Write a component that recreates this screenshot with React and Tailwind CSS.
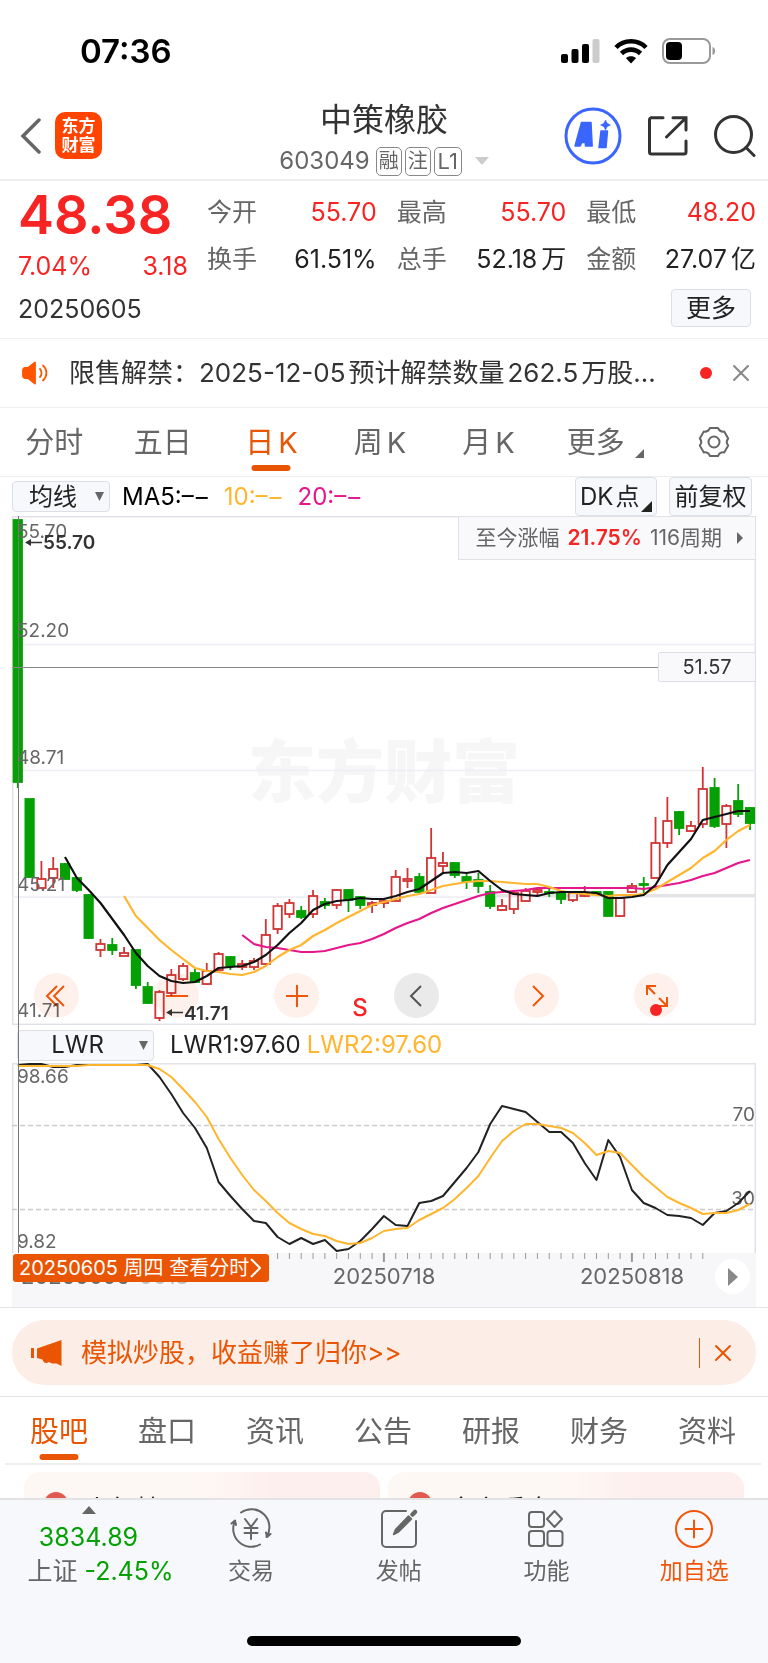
import { X } from 'lucide-react';

const quotes = [
  { label: '今开', value: '55.70', up: true },
  { label: '最高', value: '55.70', up: true },
  { label: '最低', value: '48.20', up: true },
  { label: '换手', value: '61.51%' },
  { label: '总手', value: '52.18', unit: '万' },
  { label: '金额', value: '27.07', unit: '亿' },
];

const periods = [
  { name: '分时' },
  { name: '五日' },
  { name: '日', suffix: 'K', active: true },
  { name: '周', suffix: 'K' },
  { name: '月', suffix: 'K' },
];
const sections = ['股吧', '盘口', '资讯', '公告', '研报', '财务', '资料'];

// [direction, high, body top, body bottom, low] in chart units
const candles = [
  ['g', 520, 520, 782, 788], ['g', 799, 799, 877, 878], ['r', 861, 879, 888, 888], ['r', 857, 869, 878, 888],
  ['g', 863, 864, 879, 879], ['g', 878, 878, 890, 892], ['g', 894, 895, 938, 939], ['r', 939, 944, 950, 957],
  ['g', 938, 945, 950, 955], ['r', 947, 953, 956, 956], ['g', 950, 950, 985, 989], ['g', 982, 987, 1003, 1004],
  ['r', 990, 992, 1018, 1021], ['r', 969, 975, 993, 996], ['r', 963, 966, 979, 981], ['g', 969, 973, 982, 983],
  ['r', 963, 971, 984, 985], ['r', 952, 954, 970, 971], ['g', 956, 957, 966, 970], ['r', 960, 964, 967, 970],
  ['r', 958, 961, 967, 970], ['r', 919, 935, 964, 964], ['r', 903, 906, 929, 934], ['r', 899, 903, 914, 918],
  ['g', 906, 911, 917, 919], ['r', 890, 896, 914, 918], ['g', 898, 902, 905, 909], ['r', 889, 890, 905, 909],
  ['g', 889, 890, 900, 912], ['g', 896, 897, 905, 909], ['r', 901, 903, 905, 913], ['r', 900, 901, 903, 908],
  ['r', 870, 877, 901, 902], ['r', 868, 879, 881, 888], ['g', 873, 877, 892, 893], ['r', 828, 858, 893, 893],
  ['r', 852, 863, 866, 872], ['g', 862, 863, 875, 878], ['g', 873, 877, 881, 889], ['g', 873, 880, 886, 893],
  ['g', 885, 892, 906, 909], ['r', 899, 906, 910, 911], ['r', 891, 893, 909, 914], ['r', 888, 891, 901, 901],
  ['r', 888, 890, 892, 896], ['g', 889, 892, 893, 897], ['g', 891, 893, 899, 904], ['r', 891, 893, 900, 902],
  ['r', 886, 894, 896, 897], ['g', 891, 892, 894, 896], ['g', 891, 892, 916, 916], ['r', 897, 898, 916, 917],
  ['r', 883, 886, 892, 893], ['g', 877, 884, 885, 893], ['r', 817, 843, 878, 878], ['r', 797, 821, 843, 848],
  ['g', 811, 812, 828, 835], ['r', 821, 826, 831, 832], ['r', 767, 789, 824, 828], ['g', 778, 788, 826, 828],
  ['r', 804, 806, 824, 848], ['g', 784, 801, 814, 817], ['g', 807, 808, 823, 830],
];

const ma5 = [857, 878, 890, 903, 919, 935, 953, 966, 976, 981, 983, 982, 976, 968, 967, 966, 962, 955, 945, 933, 923, 910, 904, 901, 900, 898, 899, 899, 896, 892, 889, 881, 873, 872, 873, 871, 881, 890, 894, 895, 896, 893, 892, 892, 892, 893, 898, 898, 897, 895, 885, 865, 852, 839, 820, 817, 814, 811, 811];
const ma10 = [896, 916, 928, 940, 950, 959, 968, 971, 972, 974, 975, 972, 966, 957, 950, 945, 936, 930, 923, 917, 911, 905, 902, 899, 896, 894, 890, 886, 884, 882, 881, 881, 882, 883, 884, 884, 887, 891, 893, 894, 895, 896, 895, 895, 894, 889, 882, 875, 868, 858, 851, 840, 831, 825];
const ma20 = [935, 944, 947, 948, 950, 952, 952, 951, 948, 945, 943, 939, 934, 928, 923, 919, 913, 908, 904, 900, 896, 893, 892, 891, 890, 888, 888, 888, 888, 888, 888, 888, 888, 888, 889, 887, 885, 883, 880, 876, 873, 868, 863, 860];
const lwr1 = [1065, 1064, 1064, 1067, 1067, 1065, 1065, 1065, 1065, 1065, 1065, 1064, 1077, 1094, 1113, 1128, 1148, 1182, 1196, 1209, 1221, 1223, 1237, 1244, 1238, 1244, 1240, 1251, 1249, 1241, 1229, 1216, 1225, 1226, 1203, 1201, 1196, 1182, 1168, 1152, 1124, 1106, 1109, 1112, 1122, 1132, 1132, 1143, 1163, 1180, 1140, 1157, 1190, 1203, 1208, 1215, 1216, 1218, 1225, 1213, 1211, 1203, 1191];
const lwr2 = [1066, 1066, 1066, 1066, 1066, 1066, 1065, 1065, 1065, 1065, 1065, 1065, 1069, 1077, 1089, 1102, 1117, 1139, 1158, 1175, 1190, 1201, 1213, 1223, 1229, 1234, 1236, 1241, 1244, 1243, 1238, 1231, 1229, 1228, 1220, 1214, 1208, 1199, 1188, 1176, 1158, 1141, 1131, 1124, 1124, 1126, 1128, 1133, 1143, 1155, 1151, 1153, 1165, 1177, 1187, 1197, 1203, 1208, 1214, 1213, 1213, 1210, 1204];

const xAt = (i) => 17.8 + i * 11.81;
const toPoints = (ys, start = 0) => ys.map((y, i) => `${xAt(i + start).toFixed(1)},${y}`).join(' ');

const StatusBar = () => (
  <div className="h-[94px] pt-2 pl-20 pr-[52px] flex items-center justify-between text-black">
    <span className="text-[33px] leading-10 font-semibold">07:36</span>
    <div className="flex items-center gap-[14px]">
      <svg width="39" height="26" viewBox="0 0 39 26">
        <rect x="0" y="16" width="7" height="9" rx="2" />
        <rect x="10.500" y="11" width="7" height="14" rx="2" />
        <rect x="21" y="6" width="7" height="19" rx="2" />
        <rect x="31.500" y="1" width="7" height="24" rx="2" fill="#cccccc" />
      </svg>
      <svg width="34" height="26" viewBox="0 0 34 26" fill="none" stroke="#000" strokeWidth="4.600">
        <path d="M2 9.500C10 1.200 24 1.200 32 9.500" />
        <path d="M7.500 15.500C13 10.300 21 10.300 26.500 15.500" />
        <path d="M17 25.500l-5-5.300c2.700-2.600 7.300-2.600 10 0z" fill="#000" stroke="none" />
      </svg>
      <svg width="54" height="26" viewBox="0 0 54 26">
        <rect x="1" y="1" width="47" height="24" rx="7" fill="none" stroke="#999" strokeWidth="2" />
        <rect x="4" y="4" width="16" height="18" rx="4" />
        <path d="M50.500 9c3.500 1 3.500 7 0 8z" fill="#999" />
      </svg>
    </div>
  </div>
);

const Header = () => (
  <header className="h-[87px] grid grid-cols-3 items-center px-3 border-b-2 border-[#ececec]">
    <div className="flex items-center gap-[14px] pl-2 pb-[2px]">
      <button type="button" aria-label="返回">
        <svg width="21" height="36" viewBox="0 0 21 36" fill="none" stroke="#666" strokeWidth="3.500">
          <path d="M19 2L3 18l16 16" strokeLinecap="round" />
        </svg>
      </button>
      <div className="w-[47px] h-[47px] rounded-[10px] bg-[#ff4400] text-white text-[17px] leading-[19px] font-bold flex flex-col items-center justify-center">
        <span>东方</span>
        <span>财富</span>
      </div>
    </div>
    <div className="self-start flex flex-col items-center pt-[6px] text-[#333]">
      <h1 className="text-[32px] leading-10 whitespace-nowrap">中策橡胶</h1>
      <div className="flex items-center gap-[3px] text-[#666] mt-[5px]">
        <span className="text-2xl leading-8 pr-[3px]">603049</span>
        <span className="w-[26px] h-[29px] rounded-[5px] border border-[#888] text-xl leading-[27px] text-center">融</span>
        <span className="w-[26px] h-[29px] rounded-[5px] border border-[#888] text-xl leading-[27px] text-center">注</span>
        <span className="w-[28px] h-[29px] rounded-[5px] border border-[#888] text-[22px] leading-[27px] text-center">L1</span>
        <svg width="14" height="8" viewBox="0 0 14 8" className="ml-[10px]"><path d="M0 0h14L7 8z" fill="#ccc" /></svg>
      </div>
    </div>
    <div className="flex items-center justify-end gap-[26px] pb-[2px]">
      <button type="button" aria-label="AI">
        <svg width="58" height="58" viewBox="0 0 58 58">
          <circle cx="29" cy="29" r="27" fill="none" stroke="#3a66ff" strokeWidth="3" />
          <g fill="#3a66ff" stroke="#3a66ff" strokeWidth="1.500" strokeLinejoin="round">
            <path fillRule="evenodd" d="M17.500 15.500h9.500l1.200 23.500h-6.700l-.2-3.500h-3.600l-1.500 3.500h-5.200zM21.800 24l-2 6h2.200z" />
            <path d="M37 24h6.500l-1.500 16.500h-7z" />
            <path d="M41.500 13l1.700 3.300 3.300 1.700-3.300 1.700-1.700 3.300-1.700-3.300-3.300-1.700 3.300-1.700z" strokeWidth="0.500" />
          </g>
        </svg>
      </button>
      <button type="button" aria-label="分享">
        <svg width="40" height="40" viewBox="0 0 40 40" fill="none" stroke="#333" strokeWidth="3" strokeLinecap="round">
          <path d="M15 1.800H3.500a2 2 0 0 0-2 2V36a2 2 0 0 0 2 2H36a2 2 0 0 0 2-2V25" />
          <path d="M25 1.800h13V14M38 1.800L18.500 21" />
        </svg>
      </button>
      <button type="button" aria-label="搜索">
        <svg width="42" height="42" viewBox="0 0 42 42" fill="none" stroke="#333" strokeWidth="3" strokeLinecap="round">
          <circle cx="19.500" cy="19.500" r="18" />
          <path d="M32 32.500l8 8" />
        </svg>
      </button>
    </div>
  </header>
);

const Quote = () => (
  <section className="h-[158px] pl-[18px] pr-3 pt-2 border-b border-[#eee]">
    <div className="flex gap-[19px]">
      <div className="w-[170px] text-[#f72424]">
        <div className="text-[54px] leading-[52px] font-semibold">48.38</div>
        <div className="flex justify-between text-[25px] leading-8 pt-[9px]">
          <span>7.04%</span>
          <span>3.18</span>
        </div>
      </div>
      <dl className="flex-1 grid grid-cols-3 gap-x-5 text-[25px]">
        {quotes.map((q) => (
          <div key={q.label} className="h-[47px] flex items-center justify-between whitespace-nowrap">
            <dt className="text-[#666]">{q.label}</dt>
            <dd className={q.up ? 'text-[#f72424]' : 'text-[#222]'}>
              {q.value}
              {q.unit && <span className="pl-1">{q.unit}</span>}
            </dd>
          </div>
        ))}
      </dl>
    </div>
    <div className="flex items-center justify-between pr-[5px] pt-1">
      <span className="pt-1 text-[25px] text-[#333]">20250605</span>
      <button type="button" className="w-20 h-[38px] rounded-[4px] border border-[#dcdfe6] bg-[#f7f8fb] text-[25px] leading-8 text-[#222]">
        更多
      </button>
    </div>
  </section>
);

const Notice = () => (
  <section className="h-[69px] pl-[22px] pr-[13px] flex items-center border-b border-[#eee]">
    <svg width="26" height="24" viewBox="0 0 26 24" fill="none" stroke="#ff5500" strokeWidth="1.800" strokeLinecap="round">
      <path d="M3 7h3l7-5.500v21L6 17H3a2 2 0 0 1-2-2V9a2 2 0 0 1 2-2z" fill="#ff5500" strokeLinejoin="round" />
      <path d="M18 8c2 2 2 6 0 8M21 4.500c4.500 4 4.500 11 0 15" />
    </svg>
    <p className="flex-1 pl-[21px] text-[26px] leading-9 text-[#333] truncate">
      限售解禁：2025-12-05<span className="px-[3px]">预计解禁数量</span>262.5<span className="pl-[3px]">万股...</span>
    </p>
    <span className="w-3 h-3 rounded-full bg-[#f72424]" />
    <button type="button" aria-label="关闭" className="ml-[15px] text-[#888]">
      <X size={28} strokeWidth={1.7} />
    </button>
  </section>
);

const PeriodTabs = () => (
  <nav className="h-[69px] flex border-b border-[#eee] text-[29px] text-[#666]">
    {periods.map((p) => (
      <button
        key={p.name}
        type="button"
        className={p.active ? 'relative flex-1 pt-[2px] text-[#ea5504]' : 'relative flex-1 pt-[2px]'}
      >
        {p.name}
        {p.suffix && <span className="pl-1">{p.suffix}</span>}
        {p.active && <span className="absolute bottom-[5px] left-1/2 -translate-x-1/2 w-[39px] h-[6px] rounded-[3px] bg-[#ea5504]" />}
      </button>
    ))}
    <button type="button" className="flex-1 flex items-center justify-center gap-[10px] pt-[2px] pl-2">
      更多
      <svg width="9" height="9" viewBox="0 0 9 9" className="mt-5"><path d="M9 0v9H0z" fill="#666" /></svg>
    </button>
    <button type="button" aria-label="设置" className="flex-1 flex items-center justify-center">
      <svg width="32" height="32" viewBox="0 0 32 32" fill="none" stroke="#666" strokeWidth="2" strokeLinejoin="round">
        <path d="M12 2h8c1.200 2.800 3.200 4 6.200 3.600l4 6.900c-2 2.400-2 4.600 0 7l-4 6.900c-3-.4-5 .8-6.200 3.600h-8c-1.200-2.800-3.200-4-6.200-3.600l-4-6.900c2-2.400 2-4.600 0-7l4-6.900C8.800 6 10.800 4.800 12 2z" />
        <circle cx="16" cy="16" r="5.500" />
      </svg>
    </button>
  </nav>
);

const Picker = ({ label, options, width }) => (
  <div className={`relative ${width}`}>
    <select
      aria-label={label}
      className="block w-full h-[31px] appearance-none rounded-[4px] border border-[#dcdfe6] bg-[#f7f8fb] pr-4 text-2xl leading-7 text-center text-[#222]"
    >
      {options.map((o) => <option key={o}>{o}</option>)}
    </select>
    <svg width="9" height="9" viewBox="0 0 9 9" className="absolute right-[6px] top-[11px] pointer-events-none">
      <path d="M0 0h9L4.500 9z" fill="#666" />
    </svg>
  </div>
);

const MaValue = ({ name, color }) => (
  <span className={`flex gap-[2px] ${color}`}>
    <span>{name}:–</span>
    <span>–</span>
  </span>
);

const MaRow = () => (
  <div className="h-[39px] mx-3 flex items-center text-2xl">
    <Picker label="均线" options={['均线']} width="w-[98px]" />
    <div className="flex gap-4 pl-3 pt-px">
      <MaValue name="MA5" color="text-black" />
      <MaValue name="10" color="text-[#ffb52e]" />
      <MaValue name="20" color="text-[#e6168b]" />
    </div>
    <button type="button" className="relative ml-auto w-[82px] h-[39px] rounded-[4px] border border-[#dcdfe6] bg-[#f7f8fb] pl-1 text-left text-[#222] whitespace-nowrap">
      DK<span className="pl-[2px]">点</span>
      <svg width="11" height="11" viewBox="0 0 11 11" className="absolute right-[4px] bottom-[3px]"><path d="M11 0v11H0z" fill="#222" /></svg>
    </button>
    <button type="button" className="ml-3 mr-1 w-[83px] h-[39px] rounded-[4px] border border-[#dcdfe6] bg-[#f7f8fb] text-[#222] whitespace-nowrap">
      前复权
    </button>
  </div>
);

const Candle = ({ i, data }) => {
  const [dir, high, top, bottom, low] = data;
  const color = dir === 'g' ? '#04a004' : '#d03434';
  const x = xAt(i);
  return (
    <g stroke={color} strokeWidth="1.800">
      <path d={`M${x} ${high}V${top}M${x} ${bottom}V${low}`} />
      <rect x={x - 4.2} y={top} width="8.400" height={Math.max(bottom - top, 1)} fill={dir === 'g' ? color : 'none'} />
    </g>
  );
};

const chartTools = [
  { name: '最左', d: 'M16 6L6 16l10 10M23 6L13 16l10 10' },
  { name: '缩小', d: 'M5 16h22' },
  { name: '放大', d: 'M5 16h22M16 5v22' },
  { name: '左移', d: 'M20 6L10 16l10 10', muted: true },
  { name: '右移', d: 'M12 6l10 10-10 10' },
  { name: '全屏', d: 'M6 15V6h9M6 6l8 8M26 17v9h-9M26 26l-8-8', dot: true },
];

const PriceChart = () => (
  <div className="relative">
    <svg viewBox="12 516 744 509" className="block w-full h-auto">
      <text x="384" y="797" fontSize="68" fontWeight="900" textAnchor="middle" fill="#f6f6f6">东方财富</text>
      <g stroke="#eceef3" strokeWidth="1.500" fill="none">
        <rect x="12.700" y="516.700" width="742.600" height="507.600" stroke="#e0e2e8" />
        <path d="M12 644.500H756M12 770.500H756M12 897H756" />
      </g>
      <path d="M496 895.500H756" stroke="#e4e4e6" strokeWidth="3" />
      {candles.map((c, i) => <Candle key={i} i={i} data={c} />)}
      <g fontSize="19" fill="#666">
        <text x="17" y="538">55.70</text>
        <text x="17" y="637">52.20</text>
        <text x="17" y="764">48.71</text>
        <text x="17" y="891">45.21</text>
        <text x="17" y="1017">41.71</text>
      </g>
      <g fill="none" strokeWidth="2.200" strokeLinejoin="round">
        <polyline points={toPoints(ma20, 19)} stroke="#e6168b" />
        <polyline points={toPoints(ma10, 9)} stroke="#ffb52e" />
        <polyline points={toPoints(ma5, 4)} stroke="#111" />
      </g>
      <g fontSize="19" fontWeight="600" fill="#333">
        <text x="43" y="549">55.70</text>
        <text x="184" y="1020">41.71</text>
        <path d="M29 542.500H42M170 1012.500H183" stroke="#333" strokeWidth="1.700" />
        <path d="M25 542.500l6-3.500v7zM166 1012.500l6-3.500v7z" />
      </g>
      <path d="M12 667.500H658" stroke="#888" />
      <text x="360" y="1016" fontSize="24" fontWeight="500" textAnchor="middle" fill="#f72424">S</text>
    </svg>
    <button type="button" className="absolute top-0 right-0 h-11 pl-4 pr-3 flex items-center gap-2 border border-[#e0e2e8] bg-[#f9f9fc] text-[21px] text-[#666] whitespace-nowrap">
      <span>至今涨幅</span>
      <span className="font-semibold text-[#f72424]">21.75%</span>
      <span>116周期</span>
      <svg width="6" height="12" viewBox="0 0 6 12" className="ml-[7px]"><path d="M0 0l6 6-6 6z" fill="#666" /></svg>
    </button>
    <span className="absolute top-[136px] right-0 w-[98px] h-[30px] rounded-[2px] border border-[#dcdfe6] bg-[#f9f9fc] text-center text-[20px] leading-7 text-[#333]">
      51.57
    </span>
    <div className="absolute bottom-[7px] left-[22px] right-[77px] flex justify-between mix-blend-multiply">
      {chartTools.map((t) => (
        <button
          key={t.name}
          type="button"
          aria-label={t.name}
          className={`relative w-[45px] h-[45px] rounded-full flex items-center justify-center ${t.muted ? 'bg-[#eaeaea] text-[#555]' : 'bg-[#fef1eb] text-[#f0560a]'}`}
        >
          <svg width="32" height="32" viewBox="0 0 32 32" fill="none" stroke="currentColor" strokeWidth="2">
            <path d={t.d} />
          </svg>
          {t.dot && <span className="absolute bottom-[2px] left-4 w-3 h-3 rounded-full bg-[#f72424]" />}
        </button>
      ))}
    </div>
  </div>
);

const LwrChart = () => (
  <div>
    <div className="h-[38px] pt-[2px] pl-[5px] flex items-center text-2xl">
      <Picker label="指标" options={['LWR']} width="w-[137px]" />
      <span className="pl-4 text-[#222]">LWR1:97.60</span>
      <span className="pl-[6px] text-[#ffb52e]">LWR2:97.60</span>
    </div>
    <svg viewBox="12 1063 744 190" className="block w-full h-auto">
      <path d="M12.700 1253V1063.700H755.300V1253" fill="none" stroke="#e0e2e8" strokeWidth="1.500" />
      <path d="M12 1125.500H756M12 1209.500H756" stroke="#ccc" strokeWidth="1.500" strokeDasharray="5 3" />
      <g fontSize="19" fill="#666">
        <text x="17" y="1083">98.66</text>
        <text x="17" y="1248">9.82</text>
        <text x="755" y="1121" textAnchor="end">70</text>
        <text x="755" y="1205" textAnchor="end">30</text>
      </g>
      <g fill="none" strokeWidth="2" strokeLinejoin="round">
        <polyline points={toPoints(lwr1)} stroke="#222" />
        <polyline points={toPoints(lwr2)} stroke="#ffb52e" />
      </g>
    </svg>
  </div>
);

const DateAxis = () => (
  <div className="relative h-[54px] bg-[#f7f7fa]">
    <svg viewBox="12 1253 744 54" className="block w-full h-auto">
      {candles.slice(22, 59).map((_, i) => {
        const major = i === 9 || i === 30;
        return (
          <path
            key={i}
            d={`M${xAt(i + 22)} 1253v${major ? 9 : 6}`}
            stroke="#999"
            strokeWidth={major ? 2 : 1}
          />
        );
      })}
      <g fontSize="22" fill="#666">
        <text x="21" y="1284">20250605</text>
        <text x="139" y="1284" fill="#bbb">0613</text>
        <text x="384" y="1284" textAnchor="middle">20250718</text>
        <text x="632" y="1284" textAnchor="middle">20250818</text>
      </g>
    </svg>
    <a href="#fenshi" className="absolute top-px left-px h-7 pl-[6px] pr-2 flex items-center gap-px rounded-[3px] bg-[#ea5504] text-[20px] text-white whitespace-nowrap">
      20250605 周四 查看分时
      <svg width="11" height="20" viewBox="0 0 11 20" fill="none" stroke="#fff" strokeWidth="2"><path d="M1 1l9 9-9 9" /></svg>
    </a>
    <button type="button" aria-label="播放" className="absolute top-[6px] right-[6px] w-[35px] h-[35px] rounded-full bg-white flex items-center justify-center">
      <svg width="10" height="18" viewBox="0 0 10 18"><path d="M0 0l10 9-10 9z" fill="#888" /></svg>
    </button>
  </div>
);

const Promo = () => (
  <section className="px-3 pt-[12px] pb-[11px] border-y border-[#e3e3e8]">
    <div className="h-[65px] rounded-full bg-[#fcede7] pl-[19px] pr-[19px] flex items-center text-[#ea5504]">
      <svg width="31" height="26" viewBox="0 0 31 26" fill="#ea5504">
        <rect x="0" y="8" width="3" height="10" />
        <path d="M6 8.500L30.500 0v26l-5-2.500H21l-3-1.500c-3 2-5.500 1-6.500-2.500L6 18z" />
      </svg>
      <a href="#promo" className="pl-[19px] text-[26px]">模拟炒股，收益赚了归你&gt;&gt;</a>
      <span className="ml-auto w-px h-[30px] bg-[#ea5504]" />
      <button type="button" aria-label="关闭" className="ml-[9px]">
        <X size={28} strokeWidth={1.7} />
      </button>
    </div>
  </section>
);

const SectionTabs = () => (
  <nav className="h-[68px] ml-[5px] mr-[7px] flex border-b-2 border-[#eee] text-[29px] text-[#666]">
    {sections.map((s) => (
      <button
        key={s}
        type="button"
        className={s === '股吧' ? 'relative flex-1 pt-[4px] text-[#ea5504]' : 'relative flex-1 pt-[4px]'}
      >
        {s}
        {s === '股吧' && <span className="absolute bottom-[3px] left-1/2 -translate-x-1/2 w-[39px] h-[6px] rounded-[3px] bg-[#ea5504]" />}
      </button>
    ))}
  </nav>
);

const Feature = ({ title }) => (
  <div className="flex-1 h-20 rounded-2xl bg-linear-to-r from-[#fef8f4] from-50% to-[#fdefed] to-70% pl-5 pt-5 flex items-start gap-4 text-[26px] leading-9 text-[#222]">
    <span className="w-6 h-6 rounded-full bg-[#e05a50]" />
    {title}
  </div>
);

const BarItem = ({ label, active, children }) => (
  <button
    type="button"
    className={`flex-1 flex flex-col items-center pt-2 text-[23px] leading-8 ${active ? 'text-[#f0560a]' : 'text-[#666]'}`}
  >
    <svg width="42" height="42" viewBox="0 0 42 42" fill="none" stroke="currentColor" strokeWidth="2" strokeLinecap="round" strokeLinejoin="round">
      {children}
    </svg>
    <span className="pt-[5px]">{label}</span>
  </button>
);

const BottomBar = () => (
  <footer className="h-[165px] shrink-0 border-t-2 border-[#e3e3e6] bg-[#f7f8fb] text-[#666]">
    <div className="h-[92px] flex">
      <button type="button" className="w-[177px] flex flex-col items-center pt-[6px] text-[25px] text-[#04a004]">
        <svg width="14" height="8" viewBox="0 0 14 8"><path d="M0 8h14L7 0z" fill="#666" /></svg>
        <span className="leading-9 pt-[5px]">3834.89</span>
        <span className="leading-8 pl-6 whitespace-nowrap"><span className="text-[#666]">上证</span> -2.45%</span>
      </button>
      <BarItem label="交易">
        <path d="M11 4.500A18 18 0 0 1 36.500 29M30 36.500A18 18 0 0 1 5 13M1.500 15.500L5 12.500l1 4.500M40.500 26l-3.500 3-1-4.500" />
        <path d="M15 11l6 8 6-8M21 19v12M14.500 20h13M14.500 25h13" />
      </BarItem>
      <BarItem label="发帖">
        <path d="M28 3H8a4 4 0 0 0-4 4v28a4 4 0 0 0 4 4h26a4 4 0 0 0 4-4V13" />
        <path d="M15.500 26.500l2-5L30.500 8l3 3-13 13z" fill="#666" strokeWidth="1.500" />
        <path d="M34.500 6.500L37 4" strokeWidth="4.500" />
      </BarItem>
      <BarItem label="功能">
        <rect x="4" y="4" width="15" height="15" rx="3" />
        <path d="M29.500 3l7.500 8-7.500 8-7.500-8z" />
        <rect x="4" y="23" width="15" height="15" rx="3" />
        <rect x="22.500" y="23" width="15" height="15" rx="3" />
      </BarItem>
      <BarItem label="加自选" active>
        <circle cx="21" cy="21" r="18" />
        <path d="M12.500 21h17M21 12.500v17" />
      </BarItem>
    </div>
    <div className="mx-auto mt-[44px] w-[274px] h-[10px] rounded-full bg-black" />
  </footer>
);

const App = () => (
  <div className="min-h-screen flex flex-col bg-white overflow-hidden font-['Inter','Noto_Sans_CJK_SC',sans-serif]">
    <StatusBar />
    <Header />
    <Quote />
    <Notice />
    <PeriodTabs />
    <MaRow />
    <main className="relative mx-3">
      <PriceChart />
      <LwrChart />
      <DateAxis />
      {/* crosshair through both charts */}
      <span className="absolute left-[6px] top-0 bottom-[54px] w-px bg-[#777]" />
    </main>
    <Promo />
    <SectionTabs />
    <div className="h-[33px] px-6 pt-[7px] flex gap-2 overflow-hidden">
      <Feature title="人气榜" />
      <Feature title="全市看盘" />
    </div>
    <BottomBar />
  </div>
);

export default App;
